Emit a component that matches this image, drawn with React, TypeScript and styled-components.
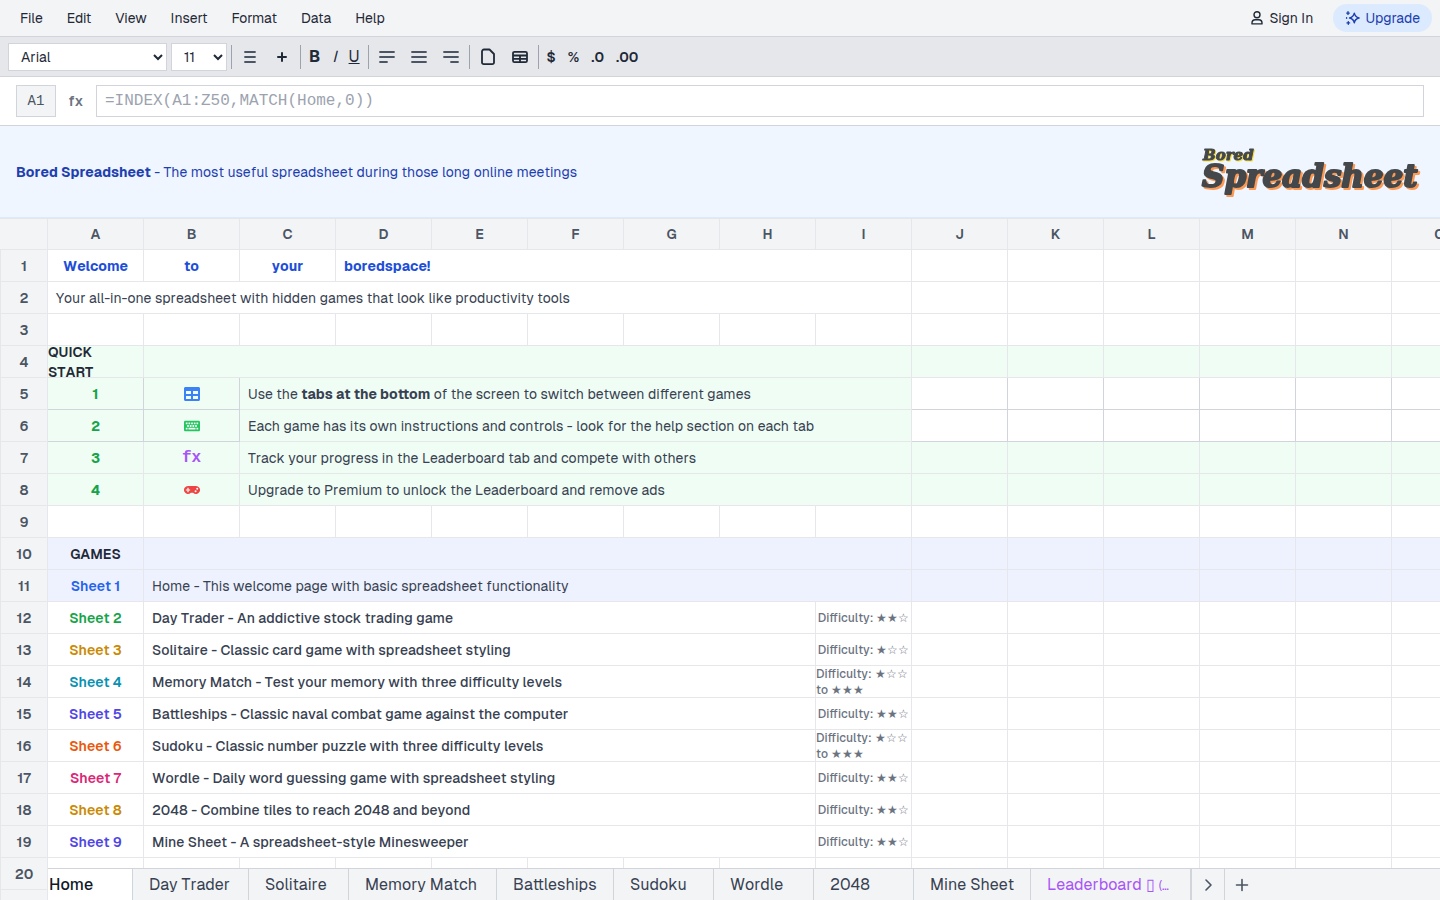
import React from 'react';
import styled, { createGlobalStyle, css } from 'styled-components';
import { FaGamepad, FaKeyboard, FaTable } from 'react-icons/fa';

const GlobalStyle = createGlobalStyle`
  *, *::before, *::after { box-sizing: border-box; }
  body { margin: 0; background: #fff; }
  body, button, select, input {
    font-family: Geist, 'Liberation Sans', sans-serif;
    font-size: 14px;
    line-height: 20px;
    font-kerning: none;
    color: #1f2937;
  }
  button { border: 0; background: none; padding: 0; cursor: pointer; }
`;

const mono = css`font-family: 'Liberation Mono', monospace;`;
const line = '#d1d5db';

const Page = styled.div`
  display: flex;
  flex-direction: column;
  height: 100vh;
  overflow: hidden;
  position: relative;
`;

const MenuBar = styled.header`
  display: flex;
  align-items: center;
  justify-content: space-between;
  flex: none;
  padding: 4px 8px;
  background: #f3f4f6;
  border-bottom: 1px solid ${line};
  button { font-kerning: normal; }
`;

const Menus = styled.nav`
  display: flex;
`;

const MenuButton = styled.button`
  padding: 4px 12px;
`;

const Account = styled.div`
  display: flex;
  align-items: center;
  gap: 8px;
`;

const SignInButton = styled.button`
  display: flex;
  align-items: center;
  gap: 4px;
  padding: 4px 12px;
`;

const UpgradeButton = styled(SignInButton)`
  border-radius: 14px;
  background: #dbeafe;
  color: #1e40af;
`;

const Toolbar = styled.div`
  display: flex;
  align-items: center;
  gap: 4px;
  flex: none;
  height: 40px;
  padding: 0 8px;
  background: #e5e7eb;
  border-bottom: 1px solid ${line};
`;

const ToolSelect = styled.select<{ $width: number }>`
  width: ${(p) => p.$width}px;
  height: 28px;
  padding: 0 8px;
  border: 1px solid ${line};
  background: #fff;
`;

const Divider = styled.span`
  width: 1px;
  height: 24px;
  background: #9ca3af;
`;

const IconButton = styled.button<{ $muted?: boolean }>`
  display: flex;
  align-items: center;
  justify-content: center;
  width: 28px;
  height: 28px;
  color: ${(p) => (p.$muted ? '#4b5563' : '#1f2937')};
`;

const TextButton = styled.button<{ $kind?: 'bold' | 'italic' | 'underline' }>`
  padding: 0 4px;
  font-weight: 600;
  ${(p) => p.$kind && css`font-size: 16px; line-height: 24px; font-weight: 400;`}
  ${(p) => p.$kind === 'bold' && css`font-weight: 700;`}
  ${(p) => p.$kind === 'italic' && css`font-style: italic;`}
  ${(p) => p.$kind === 'underline' && css`text-decoration: underline;`}
`;

const FormulaBar = styled.div`
  display: flex;
  align-items: center;
  flex: none;
  padding: 8px 16px;
  border-bottom: 1px solid ${line};
`;

const CellName = styled.div`
  ${mono}
  width: 40px;
  height: 32px;
  padding-top: 5px;
  text-align: center;
  color: #4b5563;
  background: #f3f4f6;
  border: 1px solid ${line};
`;

const FxLabel = styled.label`
  width: 40px;
  text-align: center;
  font-weight: 600;
  color: #6b7280;
`;

const FormulaInput = styled.input`
  ${mono}
  flex: 1;
  min-width: 0;
  height: 32px;
  padding: 0 8px;
  font-size: 16px;
  border: 1px solid ${line};
  &::placeholder { color: #9ca3af; }
`;

const Banner = styled.section`
  display: flex;
  align-items: center;
  justify-content: space-between;
  flex: none;
  padding: 8px 16px;
  color: #1e40af;
  background: #eff6ff;
  border-bottom: 1px solid #dbeafe;
  p { margin: 0; }
`;

const Logo = styled.svg`
  width: 224px;
  height: 75px;
  font-family: 'DejaVu Serif', serif;
  font-style: italic;
  font-weight: 700;
  fill: #44484b;
  stroke: #44484b;
  stroke-linejoin: round;
`;

const LogoTop = styled.text`
  font-size: 15px;
  stroke-width: 1px;
  filter: drop-shadow(1px 1px 0 #f5dc3c);
`;

const LogoMain = styled.text`
  font-size: 31px;
  stroke-width: 2px;
  filter: drop-shadow(2px 2px 0 #fb9a55);
`;

const GridArea = styled.main`
  flex: 1;
  min-height: 0;
  overflow: hidden;
`;

const Sheet = styled.table`
  table-layout: fixed;
  width: 0;
  border-spacing: 0;
  border-top: 1px solid #e5e7eb;
`;

const HeadCol = styled.col`
  width: 48px;
`;

const Col = styled.col`
  width: 96px;
`;

const ColHead = styled.th`
  height: 31px;
  padding: 0;
  font-weight: 600;
  color: #4b5563;
  background: #f3f4f6;
  border-right: 1px solid #e5e7eb;
  border-bottom: 1px solid #e5e7eb;
`;

const RowHead = styled(ColHead)`
  height: 32px;
  position: relative;
  z-index: 2;
  border-left: 1px solid #e5e7eb;
`;

const tints = { none: '#fff', green: '#f0fdf4', indigo: '#eef2ff' };
type Tint = keyof typeof tints;

const Cell = styled.td<{ $tint?: Tint; $strong?: boolean }>`
  height: 32px;
  padding: 0;
  background: ${(p) => tints[p.$tint || 'none']};
  border-style: solid;
  border-width: 0 1px 1px 0;
  border-color: ${(p) => (p.$strong ? line : '#e5e7eb')};
`;

const Content = styled.div<{ $color?: string; $weight?: number; $left?: boolean }>`
  display: flex;
  align-items: center;
  justify-content: ${(p) => (p.$left ? 'flex-start' : 'center')};
  height: 31px;
  padding: ${(p) => (p.$left ? '0 8px' : '0')};
  overflow: hidden;
  color: ${(p) => p.$color || '#374151'};
  font-weight: ${(p) => p.$weight || 400};
  b { font-weight: 700; }
`;

const Difficulty = styled(Content)`
  font-size: 12px;
  line-height: 16px;
`;

const TwoLines = styled.span`
  flex: 1;
`;

const FxMark = styled.span`
  ${mono}
  font-size: 16px;
  font-weight: 700;
`;

const TabBar = styled.footer`
  position: absolute;
  z-index: 1;
  left: 48px;
  right: 0;
  bottom: 0;
  display: flex;
  height: 32px;
  background: #f3f4f6;
  border-top: 1px solid ${line};
`;

const Tab = styled.button<{ $width: number; $active?: boolean; $premium?: boolean }>`
  flex: none;
  width: ${(p) => p.$width}px;
  padding: ${(p) => (p.$active ? '0 16px 0 1px' : '0 16px')};
  overflow: hidden;
  text-align: left;
  white-space: nowrap;
  font-size: 16px;
  line-height: 24px;
  color: ${(p) => (p.$premium ? '#a855f7' : p.$active ? '#111827' : '#374151')};
  font-weight: ${(p) => (p.$active ? 500 : 400)};
  background: ${(p) => (p.$active ? '#fff' : 'transparent')};
  border-right: 1px solid ${line};
  small { font-size: 12px; line-height: 16px; }
`;

const TabTools = styled.div`
  display: flex;
  border-left: 1px solid ${line};
`;

const TabTool = styled.button`
  display: flex;
  align-items: center;
  justify-content: center;
  width: 33px;
  color: #4b5563;
  &:first-of-type { border-right: 1px solid ${line}; }
`;

const Strokes = ({ d, weight = 1.6 }: { d: string; weight?: number }) => (
  <svg width="20" height="20" viewBox="0 0 20 20" fill="none" stroke="currentColor" strokeWidth={weight} strokeLinecap="round" strokeLinejoin="round" aria-hidden="true">
    <path d={d} />
  </svg>
);

const UserIcon = () => (
  <svg width="16" height="16" viewBox="0 0 16 16" fill="none" stroke="currentColor" strokeWidth="1.4" strokeLinejoin="round" aria-hidden="true">
    <circle cx="8" cy="4.7" r="3" />
    <path d="M3 13.900v-.9c0-1.900 1.500-3.200 3.300-3.200h3.400c1.800 0 3.300 1.300 3.300 3.200v.9z" />
  </svg>
);

const SparklesIcon = () => (
  <svg width="16" height="16" viewBox="0 0 16 16" fill="none" stroke="currentColor" strokeWidth="1.4" strokeLinecap="round" strokeLinejoin="round" aria-hidden="true">
    <path d="M9.300 3.200c.6 3.100 1.700 4.200 4.800 4.800-3.100.6-4.200 1.700-4.800 4.800-.6-3.100-1.700-4.200-4.800-4.800 3.100-.6 4.200-1.700 4.800-4.800z" />
    <path d="M3 1.800v2.600M1.700 3.100h2.600M3.300 11.600v2.600M2 12.900h2.600M1.600 7.800v.4" />
  </svg>
);

const letters = 'ABCDEFGHIJKLMNOPQRSTUVWXYZ'.split('');

interface CellData {
  span?: number;
  text?: React.ReactNode;
  color?: string;
  weight?: number;
  left?: boolean;
  small?: boolean;
  strong?: boolean;
}

interface RowData {
  tint?: Tint;
  restTint?: Tint;
  strongRest?: boolean;
  cells: CellData[];
}

const blank = (): RowData => ({ cells: Array.from({ length: 9 }, () => ({})) });

const step = (n: number, color: string, icon: React.ReactNode, text: React.ReactNode, strong: boolean): RowData => ({
  tint: 'green',
  restTint: strong ? 'none' : 'green',
  strongRest: strong,
  cells: [
    { text: n, color: '#16a34a', weight: 700, strong },
    { text: icon, color, strong },
    { span: 7, text, left: true },
  ],
});

const game = (n: number, color: string, text: string, level: string): RowData => ({
  cells: [
    { text: `Sheet ${n}`, color, weight: 600 },
    { span: 7, text, left: true, weight: 500 },
    { text: `Difficulty: ${level}`, small: true, color: '#6b7280', weight: 500 },
  ],
});

const title = { color: '#1d4ed8', weight: 700 };

const rows: RowData[] = [
  {
    cells: [
      { text: 'Welcome', ...title },
      { text: 'to', ...title },
      { text: 'your', ...title },
      { span: 6, text: 'boredspace!', left: true, ...title },
    ],
  },
  { cells: [{ span: 9, text: 'Your all-in-one spreadsheet with hidden games that look like productivity tools', left: true }] },
  blank(),
  {
    tint: 'green',
    restTint: 'green',
    cells: [{ text: <TwoLines>QUICK<br />START</TwoLines>, color: '#1f2937', weight: 600 }, { span: 8 }],
  },
  step(1, '#3b82f6', <FaTable size={16} />, <span>Use the <b>tabs at the bottom</b> of the screen to switch between different games</span>, true),
  step(2, '#22c55e', <FaKeyboard size={16} />, 'Each game has its own instructions and controls - look for the help section on each tab', true),
  step(3, '#a855f7', <FxMark>fx</FxMark>, 'Track your progress in the Leaderboard tab and compete with others', false),
  step(4, '#ef4444', <FaGamepad size={16} />, 'Upgrade to Premium to unlock the Leaderboard and remove ads', false),
  blank(),
  { tint: 'indigo', restTint: 'indigo', cells: [{ text: 'GAMES', color: '#1f2937', weight: 600 }, { span: 8 }] },
  {
    tint: 'indigo',
    restTint: 'indigo',
    cells: [
      { text: 'Sheet 1', color: '#2563eb', weight: 600 },
      { span: 8, text: 'Home - This welcome page with basic spreadsheet functionality', left: true },
    ],
  },
  game(2, '#16a34a', 'Day Trader - An addictive stock trading game', '★★☆'),
  game(3, '#ca8a04', 'Solitaire - Classic card game with spreadsheet styling', '★☆☆'),
  game(4, '#0891b2', 'Memory Match - Test your memory with three difficulty levels', '★☆☆ to ★★★'),
  game(5, '#4f46e5', 'Battleships - Classic naval combat game against the computer', '★★☆'),
  game(6, '#ea580c', 'Sudoku - Classic number puzzle with three difficulty levels', '★☆☆ to ★★★'),
  game(7, '#db2777', 'Wordle - Daily word guessing game with spreadsheet styling', '★★☆'),
  game(8, '#ca8a04', '2048 - Combine tiles to reach 2048 and beyond', '★★☆'),
  game(9, '#4f46e5', 'Mine Sheet - A spreadsheet-style Minesweeper', '★★☆'),
  blank(),
  blank(),
];

const tabs = [
  { name: 'Home', width: 85 },
  { name: 'Day Trader', width: 116 },
  { name: 'Solitaire', width: 100 },
  { name: 'Memory Match', width: 148 },
  { name: 'Battleships', width: 117 },
  { name: 'Sudoku', width: 100 },
  { name: 'Wordle', width: 100 },
  { name: '2048', width: 100 },
  { name: 'Mine Sheet', width: 117 },
];

export default function App() {
  return (
    <Page>
      <GlobalStyle />
      <MenuBar>
        <Menus aria-label="Main menu">
          {['File', 'Edit', 'View', 'Insert', 'Format', 'Data', 'Help'].map((m) => (
            <MenuButton key={m}>{m}</MenuButton>
          ))}
        </Menus>
        <Account>
          <SignInButton><UserIcon />Sign In</SignInButton>
          <UpgradeButton><SparklesIcon />Upgrade</UpgradeButton>
        </Account>
      </MenuBar>

      <Toolbar role="toolbar" aria-label="Formatting">
        <ToolSelect $width={159} aria-label="Font" defaultValue="Arial">
          <option>Arial</option>
          <option>Calibri</option>
          <option>Times New Roman</option>
        </ToolSelect>
        <ToolSelect $width={56} aria-label="Font size" defaultValue="11">
          <option>10</option>
          <option>11</option>
          <option>12</option>
        </ToolSelect>
        <Divider />
        <IconButton $muted aria-label="List"><Strokes weight={1.8} d="M5 5h10M5 10h10M5 15h10" /></IconButton>
        <IconButton aria-label="Add"><Strokes weight={2} d="M10 6v8M6 10h8" /></IconButton>
        <Divider />
        <TextButton $kind="bold">B</TextButton>
        <TextButton $kind="italic">I</TextButton>
        <TextButton $kind="underline">U</TextButton>
        <Divider />
        <IconButton $muted aria-label="Align left"><Strokes weight={1.8} d="M3 5h14M3 10h14M3 15h7" /></IconButton>
        <IconButton $muted aria-label="Align center"><Strokes weight={1.8} d="M3 5h14M3 10h14M3 15h14" /></IconButton>
        <IconButton $muted aria-label="Align right"><Strokes weight={1.8} d="M3 5h14M3 10h14M10 15h7" /></IconButton>
        <Divider />
        <IconButton aria-label="New document"><Strokes weight={1.8} d="M6 2.500h5.500l4.500 4.500v8.500a1.700 1.700 0 0 1-1.700 1.700H5.700A1.700 1.700 0 0 1 4 15.500v-11A2 2 0 0 1 6 2.500z" /></IconButton>
        <IconButton aria-label="Insert table"><Strokes weight={1.8} d="M4.500 4.800h11a1.500 1.500 0 0 1 1.500 1.500v7.400a1.500 1.500 0 0 1-1.500 1.500h-11A1.500 1.500 0 0 1 3 13.700V6.300a1.500 1.500 0 0 1 1.500-1.500zM3 8.500h14M3 11.800h14M10 8.500v6.700" /></IconButton>
        <Divider />
        <TextButton>$</TextButton>
        <TextButton>%</TextButton>
        <TextButton>.0</TextButton>
        <TextButton>.00</TextButton>
      </Toolbar>

      <FormulaBar>
        <CellName>A1</CellName>
        <FxLabel htmlFor="formula">fx</FxLabel>
        <FormulaInput id="formula" type="text" placeholder="=INDEX(A1:Z50,MATCH(Home,0))" />
      </FormulaBar>

      <Banner>
        <p><b>Bored Spreadsheet</b> - The most useful spreadsheet during those long online meetings</p>
        <Logo viewBox="0 0 224 75" role="img" aria-label="Bored Spreadsheet">
          <LogoTop x="3" y="26">Bored</LogoTop>
          <LogoMain x="2" y="53">Spreadsheet</LogoMain>
        </Logo>
      </Banner>

      <GridArea>
        <Sheet>
          <colgroup>
            <HeadCol />
            {letters.map((l) => <Col key={l} />)}
          </colgroup>
          <thead>
            <tr>
              <ColHead aria-label="Rows" />
              {letters.map((l) => <ColHead key={l} scope="col">{l}</ColHead>)}
            </tr>
          </thead>
          <tbody>
            {rows.map((row, r) => (
              <tr key={r}>
                <RowHead scope="row">{r + 1}</RowHead>
                {row.cells.map((c, i) => {
                  const Box = c.small ? Difficulty : Content;
                  return (
                    <Cell key={i} colSpan={c.span} $tint={row.tint} $strong={c.strong}>
                      {c.text !== undefined && (
                        <Box $color={c.color} $weight={c.weight} $left={c.left}>{c.text}</Box>
                      )}
                    </Cell>
                  );
                })}
                {letters.slice(9).map((l) => (
                  <Cell key={l} $tint={row.restTint} $strong={row.strongRest} />
                ))}
              </tr>
            ))}
          </tbody>
        </Sheet>
      </GridArea>

      <TabBar>
        {tabs.map((t) => (
          <Tab key={t.name} $width={t.width} $active={t.name === 'Home'}>{t.name}</Tab>
        ))}
        <Tab $width={160} $premium>Leaderboard ▯ <small>(…</small></Tab>
        <TabTools>
          <TabTool aria-label="Scroll tabs right"><Strokes d="M8 5l5 5-5 5" /></TabTool>
          <TabTool aria-label="Add sheet"><Strokes d="M10 4.500v11M4.500 10h11" /></TabTool>
        </TabTools>
      </TabBar>
    </Page>
  );
}
